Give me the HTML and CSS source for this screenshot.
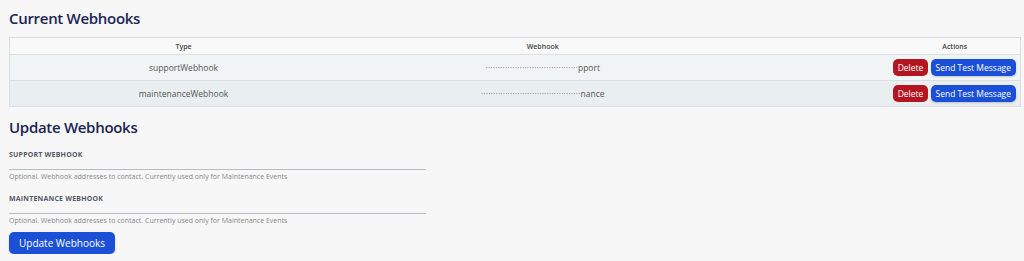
FILE: index.html
```html
<!DOCTYPE html>
<html lang="en">
<head>
  <meta charset="UTF-8" />
  <title>Webhooks</title>
  <link rel="stylesheet" href="styles.css">
</head>
<body>
  <div class="page">
    <h2 class="section-title">Current Webhooks</h2>

    <table class="hooks">
      <colgroup>
        <col class="col-type">
        <col class="col-url">
        <col class="col-actions">
      </colgroup>
      <thead>
        <tr>
          <th>Type</th>
          <th class="url">Webhook</th>
          <th>Actions</th>
        </tr>
      </thead>
      <tbody>
        <tr>
          <td>supportWebhook</td>
          <td class="url"><span class="mask">······································</span>pport</td>
          <td class="actions">
            <button class="btn danger">Delete</button>
            <button class="btn primary">Send Test Message</button>
          </td>
        </tr>
        <tr>
          <td>maintenanceWebhook</td>
          <td class="url"><span class="mask">·········································</span>nance</td>
          <td class="actions">
            <button class="btn danger">Delete</button>
            <button class="btn primary">Send Test Message</button>
          </td>
        </tr>
      </tbody>
    </table>

    <h2 class="section-title update">Update Webhooks</h2>

    <form class="hook-form">
      <div class="field">
        <label for="supportHook">Support Webhook</label>
        <input type="text" id="supportHook" />
        <p class="hint">Optional. Webhook addresses to contact. Currently used only for Maintenance Events</p>
      </div>
      <div class="field">
        <label for="maintenanceHook">Maintenance Webhook</label>
        <input type="text" id="maintenanceHook" />
        <p class="hint">Optional. Webhook addresses to contact. Currently used only for Maintenance Events</p>
      </div>
      <button type="button" class="btn primary big">Update Webhooks</button>
    </form>
  </div>
</body>
</html>
```

FILE: styles.css
```css
/* Global */
* {
  margin: 0;
  padding: 0;
  box-sizing: border-box;
}

body {
  background: #f7f7f7;
  color: #333;
  font-family: 'Open Sans', sans-serif;
}

.page {
  padding: 0 3px 0 9px;
}

/* Headings */
.section-title {
  color: #1b2553;
  font-size: 15px;
  font-weight: 600;
  letter-spacing: -0.3px;
  line-height: 20px;
  padding-top: 8px;
  height: 37px;
}

.section-title.update {
  padding-top: 10px;
  height: 43px;
}

/* Table */
.hooks {
  width: 1012px;
  border-collapse: collapse;
  border: 1px solid #dcdedf;
  font-size: 8.5px;
}

.col-type { width: 348px; }
.col-url { width: 533px; }
.col-actions { width: 131px; }

.hooks th {
  height: 17px;
  font-size: 7px;
  font-weight: 600;
  color: #444;
  background: #f9f9f9;
  text-align: center;
}

.hooks td {
  height: 26px;
  text-align: center;
  color: #555;
  border-top: 1px solid #dcdfe0;
}

.hooks tbody tr:nth-child(1) td { background: #f0f4f4; }
.hooks tbody tr:nth-child(2) td { background: #e9eff0; }

.hooks .url {
  padding-right: 161px;
}

.hooks .mask {
  letter-spacing: 0.2px;
  color: #777;
}

.hooks td.actions {
  text-align: right;
  padding-right: 4px;
  white-space: nowrap;
}

/* Buttons */
.btn {
  border: none;
  border-radius: 5px;
  color: #fff;
  font-family: inherit;
  font-size: 8.5px;
  height: 17px;
  padding: 0 5px;
  cursor: pointer;
}

.btn.danger {
  background: #b51520;
}

.btn.primary {
  background: #1c4fd8;
  box-shadow: 0 1px 2px rgba(0, 0, 0, 0.2);
}

/* Form */
.field {
  width: 417px;
}

.field + .field {
  margin-top: 8px;
}

.field label {
  display: block;
  font-size: 7px;
  font-weight: 700;
  color: #555a66;
  text-transform: uppercase;
  letter-spacing: 0.2px;
  line-height: 10px;
  height: 14px;
}

.field input {
  display: block;
  width: 100%;
  height: 6px;
  border: none;
  border-bottom: 1px solid #b8bac4;
  background: transparent;
}

.hint {
  font-size: 7px;
  color: #888;
  line-height: 10px;
  padding-top: 2px;
  height: 16px;
}

.btn.big {
  width: 106px;
  height: 22px;
  font-size: 10px;
  border-radius: 5px;
}
```
